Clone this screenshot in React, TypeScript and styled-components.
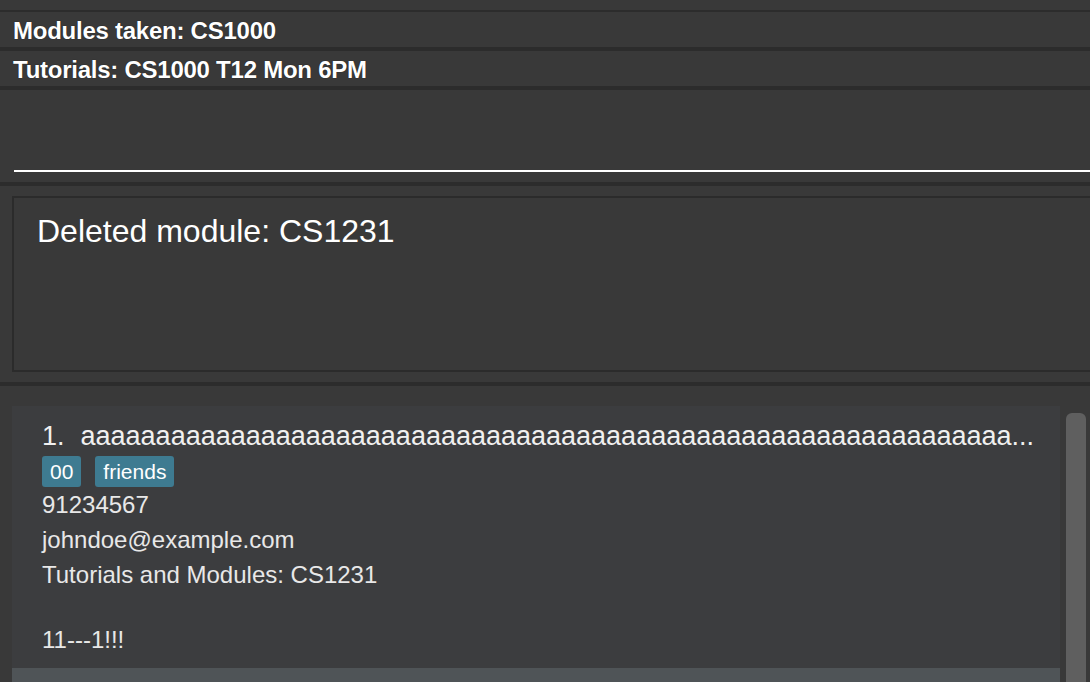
import React from "react";
import styled, { createGlobalStyle } from "styled-components";

const GlobalStyle = createGlobalStyle`
  html, body {
    margin: 0;
    padding: 0;
    background: #393939;
    overflow: hidden;
  }
  body {
    width: 1090px;
    height: 682px;
    font-family: "Liberation Sans", Arial, sans-serif;
  }
`;

const Root = styled.div`
  display: flex;
  flex-direction: column;
  width: 1090px;
  height: 682px;
  overflow: hidden;
  background: #393939;
`;

const TopGap = styled.div`
  height: 10px;
  flex: none;
`;

const Band = styled.div<{ $h?: number }>`
  height: ${(p) => p.$h ?? 4}px;
  flex: none;
  background: #2c2c2c;
`;

const InfoRow = styled.div`
  height: 35px;
  flex: none;
  display: flex;
  align-items: center;
  padding: 2px 0 0 13px;
  box-sizing: border-box;
  font-size: 24px;
  font-weight: 700;
  letter-spacing: -0.25px;
  color: #ffffff;
  text-shadow: 0 0 1px rgba(0, 0, 0, 0.7);
`;

const CommandSection = styled.div`
  height: 92px;
  flex: none;
  display: flex;
  align-items: flex-end;
  padding: 0 0 10px 14px;
  box-sizing: border-box;
`;

const CommandInput = styled.div`
  flex: 1;
  height: 60px;
  border-bottom: 2px solid #ffffff;
  margin-right: -20px;
`;

const ResultSection = styled.div`
  height: 196px;
  flex: none;
  padding: 10px 0 10px 12px;
  box-sizing: border-box;
  display: flex;
`;

const ResultBox = styled.div`
  flex: 1;
  margin-right: -20px;
  border: 2px solid #2b2b2b;
  padding: 15px 0 0 23px;
  font-size: 32px;
  line-height: 37px;
  color: #ffffff;
`;

const ListSection = styled.div`
  flex: 1;
  display: flex;
  padding: 20px 0 0 12px;
  min-height: 0;
`;

const ListColumn = styled.div`
  width: 1048px;
  flex: none;
  display: flex;
  flex-direction: column;
`;

const Card = styled.div<{ $selected?: boolean }>`
  height: 262px;
  flex: none;
  box-sizing: border-box;
  background: ${(p) => (p.$selected ? "#4f5457" : "#3c3d3f")};
  padding: 15px 20px 0 30px;
  display: flex;
  flex-direction: column;
  color: #e8e8e8;
`;

const TitleRow = styled.div`
  display: flex;
  align-items: baseline;
  font-size: 27px;
  line-height: 31px;
  color: #f0f0f0;
  white-space: nowrap;
`;

const Index = styled.span`
  flex: none;
  margin-right: 16px;
`;

const Name = styled.span`
  flex: none;
`;

const Tags = styled.div`
  display: flex;
  gap: 14px;
  margin-top: 4px;
`;

const Tag = styled.span`
  background: #3e7b91;
  color: #ffffff;
  font-size: 21px;
  line-height: 25px;
  padding: 3px 8px;
  border-radius: 3px;
`;

const Field = styled.div`
  font-size: 24px;
  line-height: 35px;
  white-space: nowrap;
`;

const BlankLine = styled.div`
  height: 30px;
  flex: none;
`;

const Gutter = styled.div`
  width: 30px;
  flex: none;
  padding: 7px 4px 0 6px;
  box-sizing: border-box;
  display: flex;
  flex-direction: column;
`;

const Thumb = styled.div`
  width: 20px;
  height: 320px;
  flex: none;
  border-radius: 6px;
  background: #5f5f5f;
`;

const shownName = "a".repeat(62) + "...";

export default function App() {
  return (
    <>
      <GlobalStyle />
      <Root>
        <TopGap />
        <Band $h={2} />
        <InfoRow>Modules taken: CS1000</InfoRow>
        <Band />
        <InfoRow>Tutorials: CS1000 T12 Mon 6PM</InfoRow>
        <Band />
        <CommandSection>
          <CommandInput />
        </CommandSection>
        <Band />
        <ResultSection>
          <ResultBox>Deleted module: CS1231</ResultBox>
        </ResultSection>
        <Band />
        <ListSection>
          <ListColumn>
            <Card>
              <TitleRow>
                <Index>1.</Index>
                <Name>{shownName}</Name>
              </TitleRow>
              <Tags>
                <Tag>00</Tag>
                <Tag>friends</Tag>
              </Tags>
              <Field>91234567</Field>
              <Field>johndoe@example.com</Field>
              <Field>Tutorials and Modules: CS1231</Field>
              <BlankLine />
              <Field>11---1!!!</Field>
            </Card>
            <Card $selected />
          </ListColumn>
          <Gutter>
            <Thumb />
          </Gutter>
        </ListSection>
      </Root>
    </>
  );
}
